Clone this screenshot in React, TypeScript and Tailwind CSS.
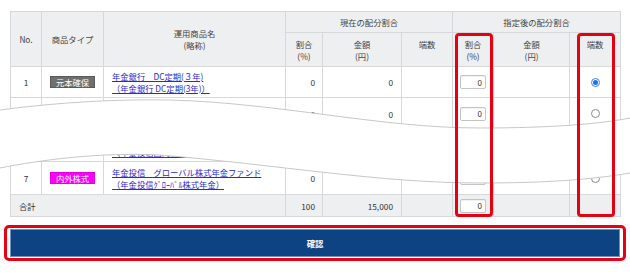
import React from "react";

type Row = {
  no: string;
  type: string;
  badge: string;
  name: string;
  short: string;
  rate: string;
  amount: string;
  checked: boolean;
  h: string;
};

const rows: Row[] = [
  {
    no: "1",
    type: "元本確保",
    badge: "bg-[#6f6f6f] border-[#5a5a5a]",
    name: "年金銀行　DC定期(３年)",
    short: "（年金銀行 DC定期(3年)）",
    rate: "0",
    amount: "0",
    checked: true,
    h: "h-[31px]",
  },
  {
    no: "2",
    type: "元本確保",
    badge: "bg-[#6f6f6f] border-[#5a5a5a]",
    name: "年金投信　国内債券ﾊﾞﾗﾝｽファンド",
    short: "（年金投信国内債券ﾊﾞﾗﾝｽ）",
    rate: "0",
    amount: "0",
    checked: false,
    h: "h-[32px]",
  },
  {
    no: "6",
    type: "国内株式",
    badge: "bg-[#e4007f] border-[#c0006a]",
    name: "年金投信　国内株式インデックス",
    short: "（年金投信国内株式）",
    rate: "0",
    amount: "0",
    checked: false,
    h: "h-[32px]",
  },
  {
    no: "7",
    type: "内外株式",
    badge: "bg-[#ff00ff] border-[#e000e0]",
    name: "年金投信　グローバル株式年金ファンド",
    short: "（年金投信ｸﾞﾛｰﾊﾞﾙ株式年金）",
    rate: "0",
    amount: "",
    checked: false,
    h: "h-[33px]",
  },
];

const th = "border border-[#d7d8da] bg-[#eeeff1] font-normal text-[#444] align-middle";
const td = "border border-[#d7d8da] align-middle";

function RateInput() {
  return (
    <input
      readOnly
      value="0"
      className="block mx-auto w-[26px] h-[14px] border border-[#c4c4c4] rounded-[2px] bg-white text-right pr-[3px] text-[8px] text-[#333] shadow-[inset_0_1px_1px_rgba(0,0,0,0.06)]"
    />
  );
}

function Radio({ checked }: { checked: boolean }) {
  return checked ? (
    <span className="mx-auto flex items-center justify-center w-[9px] h-[9px] rounded-full border border-[#3b82f0] bg-white">
      <span className="w-[5px] h-[5px] rounded-full bg-[#1a73e8]" />
    </span>
  ) : (
    <span className="mx-auto block w-[9px] h-[9px] rounded-full border border-[#8a8a8a] bg-white" />
  );
}

export default function App() {
  return (
    <div className="relative w-[630px] h-[275px] overflow-hidden bg-white font-['Noto_Sans_CJK_JP',sans-serif] text-[8.3px] leading-[12px] text-[#333]">
      <div className="pt-[11px] px-[10px]">
        <table className="table-fixed border-collapse w-[610px]">
          <colgroup>
            <col className="w-[31px]" />
            <col className="w-[62px]" />
            <col className="w-[182px]" />
            <col className="w-[37px]" />
            <col className="w-[79px]" />
            <col className="w-[51px]" />
            <col className="w-[41px]" />
            <col className="w-[76px]" />
            <col className="w-[51px]" />
          </colgroup>
          <thead>
            <tr className="h-[21px]">
              <th rowSpan={2} className={th}>No.</th>
              <th rowSpan={2} className={th}>商品タイプ</th>
              <th rowSpan={2} className={th}>
                運用商品名
                <br />
                (略称)
              </th>
              <th colSpan={3} className={th}>現在の配分割合</th>
              <th colSpan={3} className={th}>指定後の配分割合</th>
            </tr>
            <tr className="h-[34px]">
              <th className={th}>割合<br />(%)</th>
              <th className={th}>金額<br />(円)</th>
              <th className={th}>端数<br />&nbsp;</th>
              <th className={th}>割合<br />(%)</th>
              <th className={th}>金額<br />(円)</th>
              <th className={th}>端数<br />&nbsp;</th>
            </tr>
          </thead>
          <tbody>
            {rows.map((r) => (
              <tr key={r.no} className={r.h}>
                <td className={`${td} text-center`}>{r.no}</td>
                <td className={td}>
                  <span
                    className={`mx-auto flex items-center justify-center w-[45px] h-[12px] border text-white leading-none ${r.badge}`}
                  >
                    {r.type}
                  </span>
                </td>
                <td className={`${td} pl-[8px]`}>
                  <a className="block w-fit text-[#2a2ad0] underline underline-offset-[1px]">{r.name}</a>
                  <a className="block w-fit text-[#2a2ad0] underline underline-offset-[1px]">{r.short}</a>
                </td>
                <td className={`${td} text-right pr-[7px]`}>{r.rate}</td>
                <td className={`${td} text-right pr-[8px]`}>{r.amount}</td>
                <td className={td}></td>
                <td className={td}>
                  <RateInput />
                </td>
                <td className={td}></td>
                <td className={td}>
                  <Radio checked={r.checked} />
                </td>
              </tr>
            ))}
            <tr className="h-[22px] bg-[#eeeff1]">
              <td colSpan={3} className={`${td} pl-[8px]`}>合計</td>
              <td className={`${td} text-right pr-[7px]`}>100</td>
              <td className={`${td} text-right pr-[8px]`}>15,000</td>
              <td className={td}></td>
              <td className={td}>
                <RateInput />
              </td>
              <td className={td}></td>
              <td className={td}></td>
            </tr>
          </tbody>
        </table>
      </div>

      <div className="mx-[4px] mt-[8px] border-[3px] border-[#e60012] rounded-[5px] px-[3px] py-[1px]">
        <button className="flex items-center justify-center w-full h-[28px] bg-[#0e4383] border border-[#6f8fbd] text-white font-bold">
          確認
        </button>
      </div>

      {/* torn cut overlay */}
      <svg
        className="absolute left-0 top-0 pointer-events-none"
        width="630"
        height="275"
        viewBox="0 0 630 275"
      >
        <path
          d="M0,110 C60,102 120,99 170,100 C280,103 380,128 480,128 C550,128 600,124 630,118 L630,173 C600,178 560,183 480,183 C380,183 280,165 160,155 C100,152 40,160 0,168 Z"
          fill="#ffffff"
          stroke="none"
        />
        <path
          d="M0,110 C60,102 120,99 170,100 C280,103 380,128 480,128 C550,128 600,124 630,118"
          fill="none"
          stroke="#c8c8c8"
          strokeWidth="1"
        />
        <path
          d="M630,173 C600,178 560,183 480,183 C380,183 280,165 160,155 C100,152 40,160 0,168"
          fill="none"
          stroke="#c8c8c8"
          strokeWidth="1"
        />
      </svg>

      {/* red highlight boxes */}
      <div className="absolute left-[455px] top-[33px] w-[38px] h-[184px] border-[3px] border-[#e60012] rounded-[4px]" />
      <div className="absolute left-[577px] top-[33px] w-[38px] h-[184px] border-[3px] border-[#e60012] rounded-[4px]" />
    </div>
  );
}
